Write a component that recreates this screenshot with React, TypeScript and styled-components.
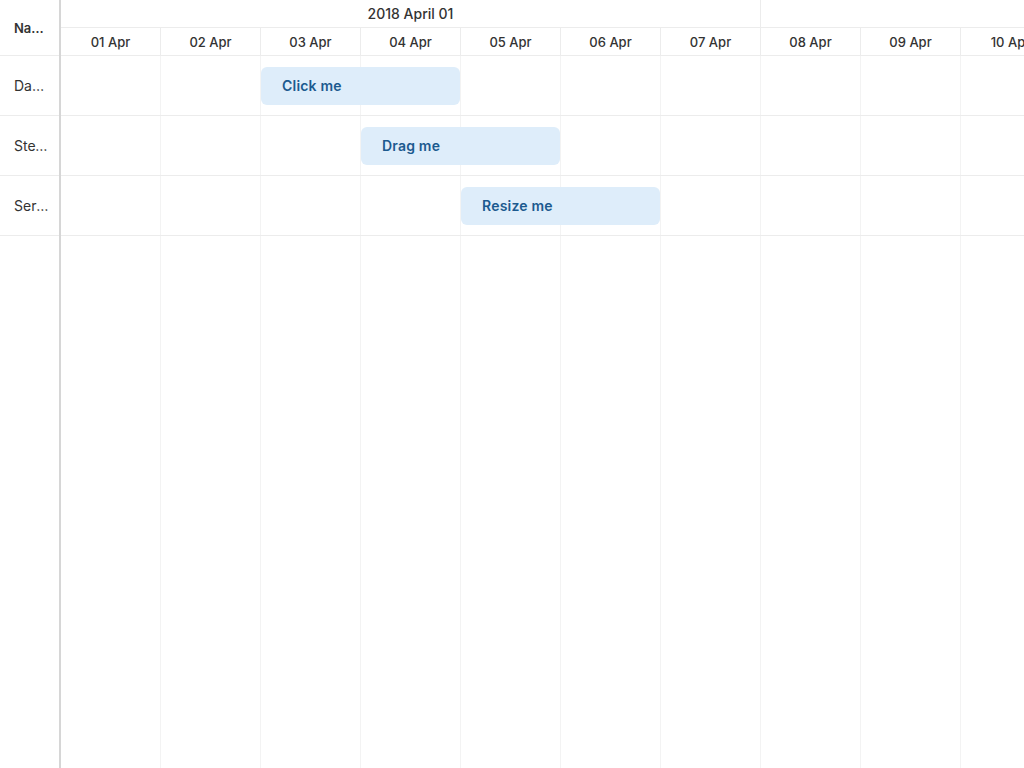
import styled, { createGlobalStyle } from "styled-components";

const GlobalStyle = createGlobalStyle`
  html, body, #root {
    margin: 0;
    height: 100%;
  }
  body {
    background: #fff;
    font-family: Inter, "Open Sans", sans-serif;
    color: #333;
    overflow: hidden;
  }
`;

const Scheduler = styled.div`
  display: flex;
  width: 100%;
  height: 100vh;
  overflow: hidden;
`;

const ResourcePane = styled.div`
  width: 59px;
  flex-shrink: 0;
  border-right: 2px solid #d6d6d6;
  display: flex;
  flex-direction: column;
`;

const ResourceHeader = styled.div`
  height: 55px;
  border-bottom: 1px solid #ececec;
  display: flex;
  align-items: center;
  padding: 0 12px 0 14px;
  font-size: 13px;
  font-weight: 600;
  color: #333;
  min-width: 0;
`;

const ResourceRow = styled.div`
  height: 59px;
  border-bottom: 1px solid #ececec;
  display: flex;
  align-items: center;
  padding: 0 10px 0 14px;
  font-size: 14px;
  color: #333;
`;

const Ellipsis = styled.span`
  display: block;
  overflow: hidden;
  white-space: nowrap;
  text-overflow: ellipsis;
  min-width: 0;
`;

const Timeline = styled.div`
  flex: 1;
  display: flex;
  flex-direction: column;
  overflow: hidden;
  min-width: 0;
`;

const HeaderRow = styled.div<{ $h: number }>`
  display: flex;
  height: ${(p) => p.$h}px;
  border-bottom: 1px solid #ececec;
  flex-shrink: 0;
`;

const GroupCell = styled.div<{ $days: number }>`
  width: ${(p) => p.$days * 100}px;
  flex-shrink: 0;
  box-sizing: border-box;
  border-right: 1px solid #ececec;
  display: flex;
  align-items: center;
  justify-content: center;
  font-size: 14px;
  font-weight: 500;
  color: #333;
  white-space: nowrap;
`;

const DayLabel = styled.div`
  width: 100px;
  flex-shrink: 0;
  box-sizing: border-box;
  border-right: 1px solid #ececec;
  display: flex;
  align-items: center;
  justify-content: center;
  font-size: 13px;
  font-weight: 500;
  color: #333;
  white-space: nowrap;
`;

const Row = styled.div`
  position: relative;
  display: flex;
  height: 59px;
  border-bottom: 1px solid #ececec;
  flex-shrink: 0;
`;

const Filler = styled.div`
  flex: 1;
  display: flex;
`;

const DayCell = styled.div`
  width: 100px;
  flex-shrink: 0;
  box-sizing: border-box;
  border-right: 1px solid #f3f3f3;
`;

const EventBar = styled.div`
  position: absolute;
  top: 11px;
  height: 38px;
  box-sizing: border-box;
  background: #deedfa;
  border-radius: 6px;
  display: flex;
  align-items: center;
  padding: 0 0 2px 21px;
  font-size: 14px;
  font-weight: 600;
  letter-spacing: 0.2px;
  color: #1c5a8f;
  white-space: nowrap;
`;

const days = ["01", "02", "03", "04", "05", "06", "07", "08", "09", "10", "11"];

const resources = [
  { name: "Daniel", event: "Click me", start: 2 },
  { name: "Steve", event: "Drag me", start: 3 },
  { name: "Sergei", event: "Resize me", start: 4 },
];

const DayCells = () => (
  <>
    {days.map((d) => (
      <DayCell key={d} />
    ))}
  </>
);

export default function App() {
  return (
    <>
      <GlobalStyle />
      <Scheduler>
        <ResourcePane>
          <ResourceHeader>
            <Ellipsis>Name</Ellipsis>
          </ResourceHeader>
          {resources.map((r) => (
            <ResourceRow key={r.name}>
              <Ellipsis>{r.name}</Ellipsis>
            </ResourceRow>
          ))}
        </ResourcePane>
        <Timeline>
          <HeaderRow $h={27}>
            <GroupCell $days={7}>2018 April 01</GroupCell>
            <GroupCell $days={7}>2018 April 08</GroupCell>
          </HeaderRow>
          <HeaderRow $h={27}>
            {days.map((d) => (
              <DayLabel key={d}>{d} Apr</DayLabel>
            ))}
          </HeaderRow>
          {resources.map((r) => (
            <Row key={r.name}>
              <DayCells />
              <EventBar style={{ left: r.start * 100, width: 199 }}>
                {r.event}
              </EventBar>
            </Row>
          ))}
          <Filler>
            <DayCells />
          </Filler>
        </Timeline>
      </Scheduler>
    </>
  );
}
